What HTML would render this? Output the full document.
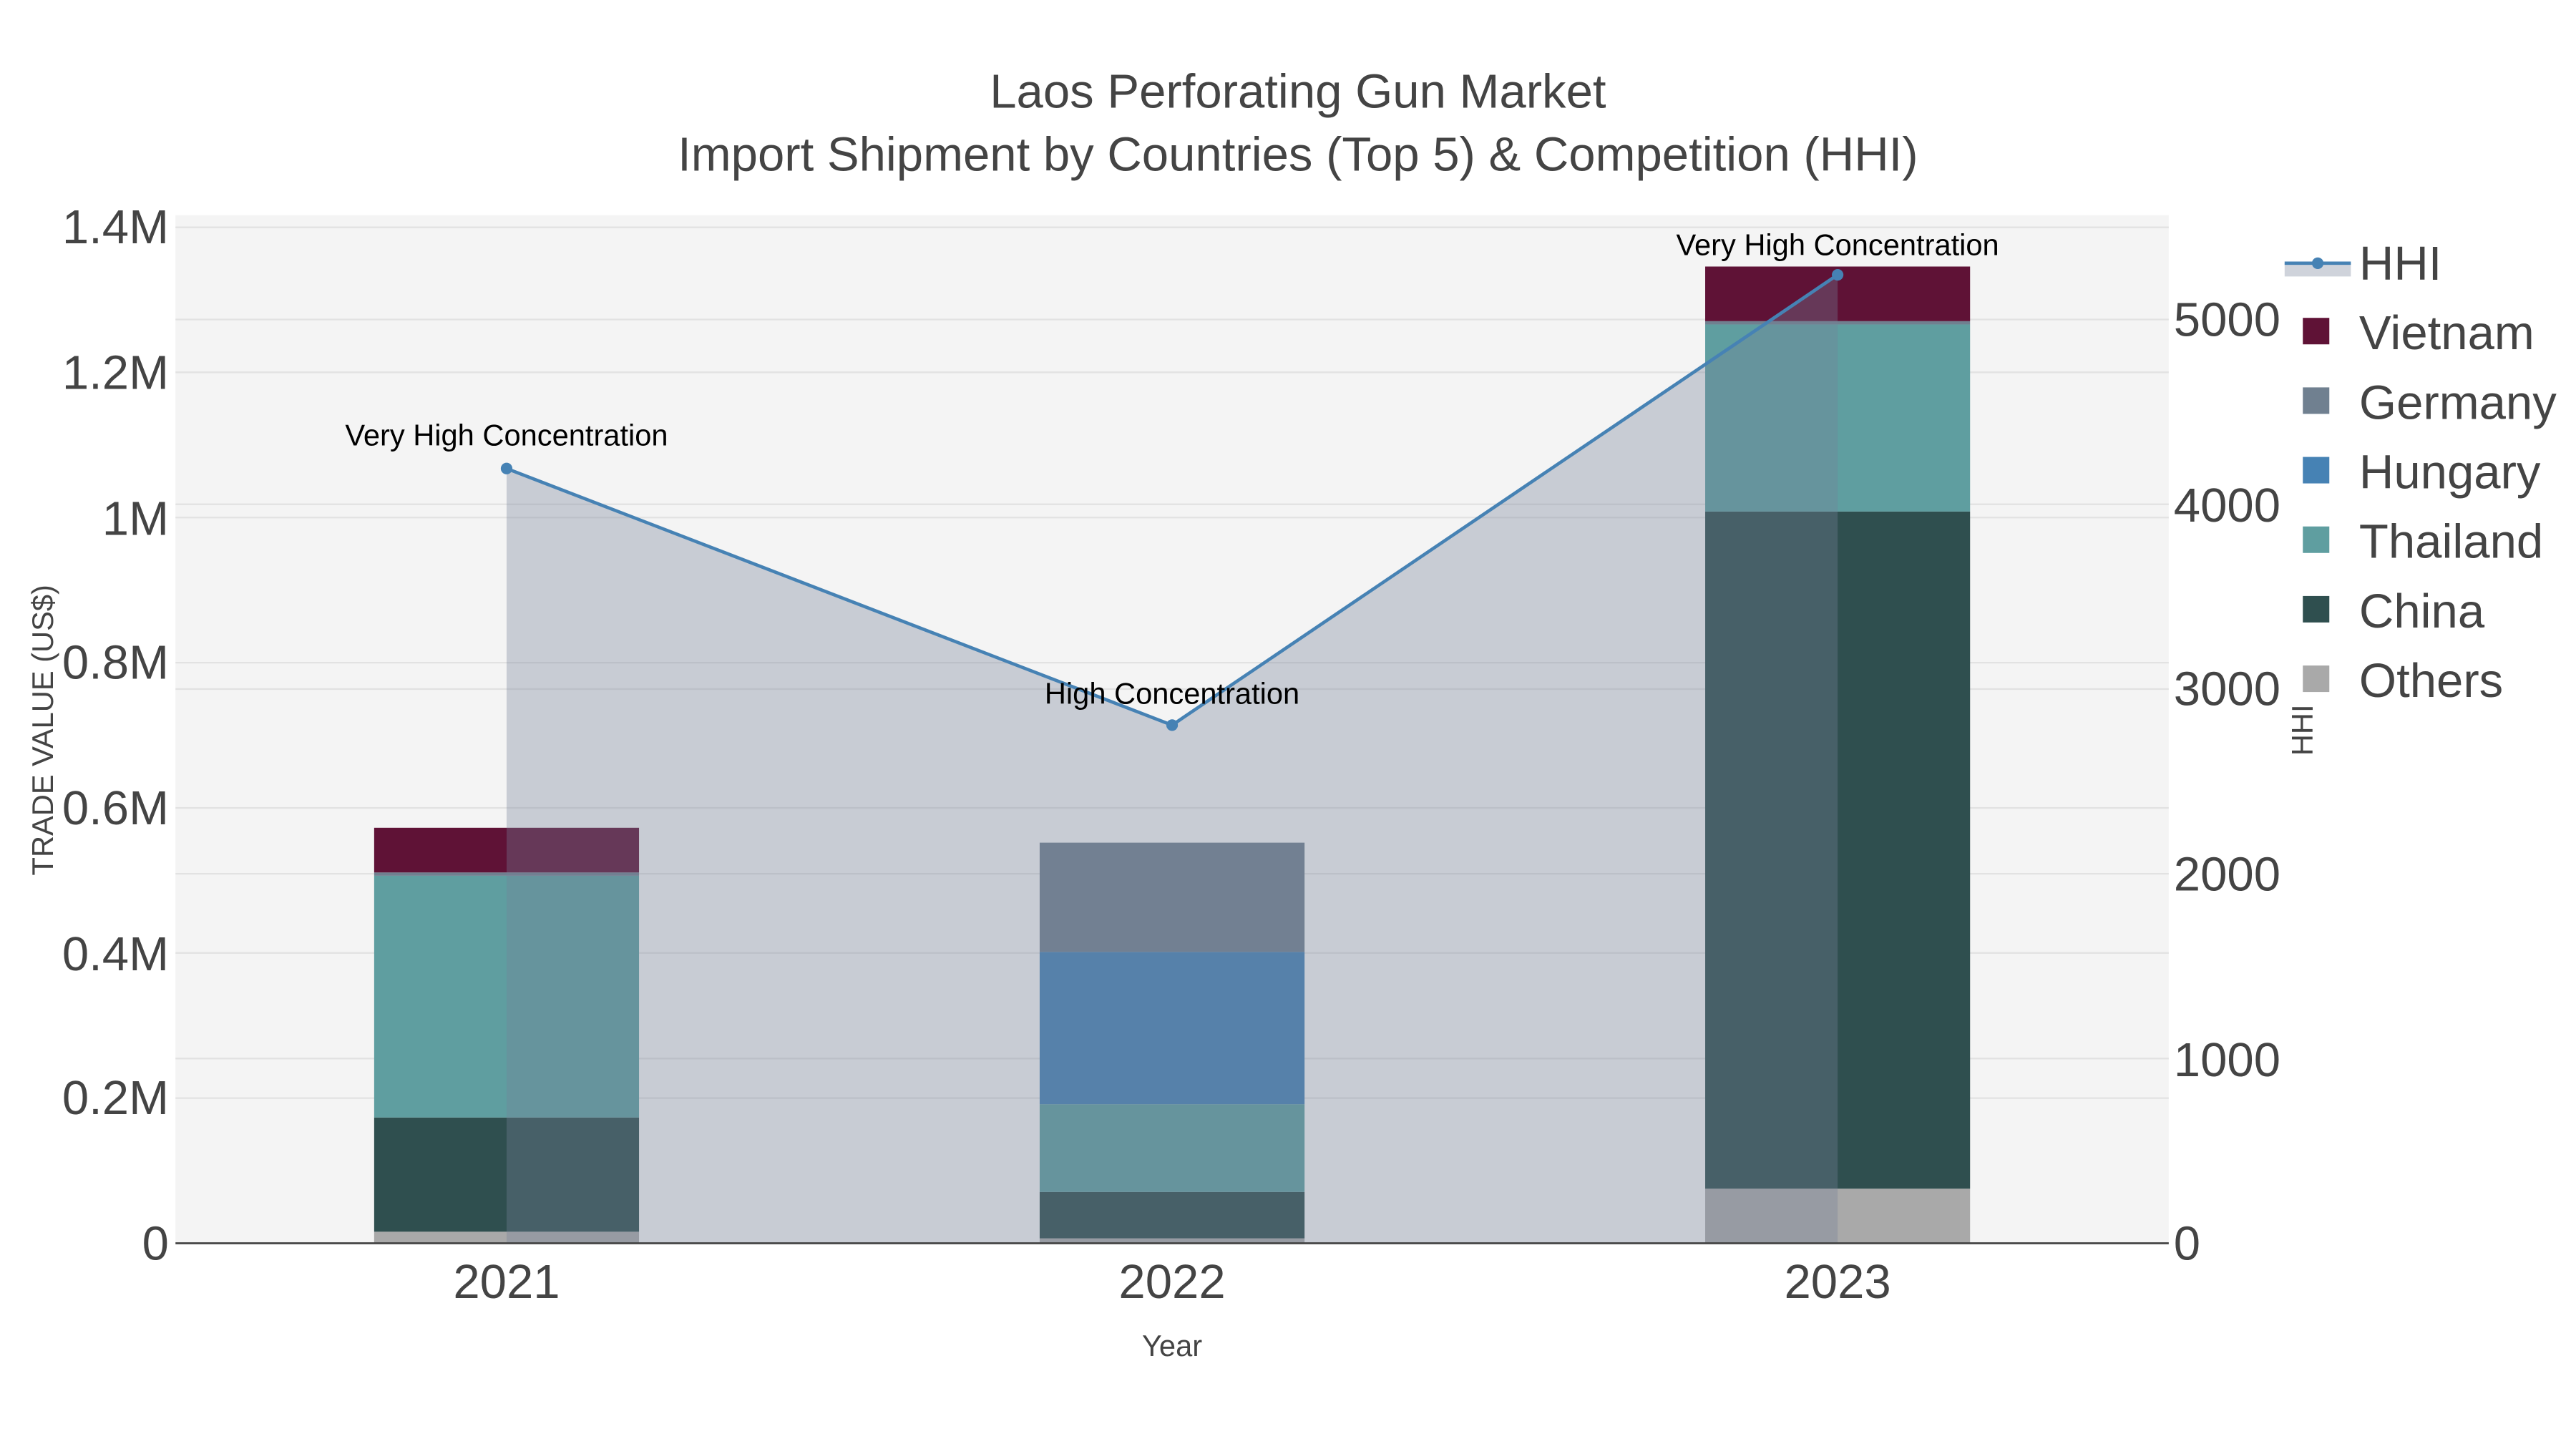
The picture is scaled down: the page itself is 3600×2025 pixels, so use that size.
<!DOCTYPE html>
<html><head><meta charset="utf-8"><style>html,body{margin:0;padding:0;background:#fff}svg{display:block}text{font-family:"Liberation Sans",Arial,sans-serif}</style></head><body>
<svg width="3600" height="2025" viewBox="0 0 1556 875.25" xmlns="http://www.w3.org/2000/svg">
<rect x="0" y="0" width="1556" height="876" fill="#fff"/>
<rect x="106" y="130" width="1204" height="621" fill="#f4f4f4"/>
<g stroke="#e2e2e2" stroke-width="1">
<line x1="106" x2="1310" y1="663.3" y2="663.3"/><line x1="106" x2="1310" y1="575.6" y2="575.6"/><line x1="106" x2="1310" y1="488" y2="488"/><line x1="106" x2="1310" y1="400.3" y2="400.3"/><line x1="106" x2="1310" y1="312.6" y2="312.6"/><line x1="106" x2="1310" y1="224.9" y2="224.9"/><line x1="106" x2="1310" y1="137.3" y2="137.3"/>
<line x1="106" x2="1310" y1="639.4" y2="639.4"/><line x1="106" x2="1310" y1="527.8" y2="527.8"/><line x1="106" x2="1310" y1="416.2" y2="416.2"/><line x1="106" x2="1310" y1="304.6" y2="304.6"/><line x1="106" x2="1310" y1="193" y2="193"/>
</g>
<rect x="226" y="744" width="160" height="7" fill="#a9a9a9"/>
<rect x="226" y="675" width="160" height="69" fill="#2f4f4f"/>
<rect x="226" y="529" width="160" height="146" fill="#5f9ea0"/>
<rect x="226" y="527" width="160" height="2" fill="#708090"/>
<rect x="226" y="500" width="160" height="27" fill="#5f1236"/>
<rect x="628" y="748" width="160" height="3" fill="#a9a9a9"/>
<rect x="628" y="720" width="160" height="28" fill="#2f4f4f"/>
<rect x="628" y="667" width="160" height="53" fill="#5f9ea0"/>
<rect x="628" y="575" width="160" height="92" fill="#4682b4"/>
<rect x="628" y="509" width="160" height="66" fill="#708090"/>
<rect x="1030" y="718" width="160" height="33" fill="#a9a9a9"/>
<rect x="1030" y="309" width="160" height="409" fill="#2f4f4f"/>
<rect x="1030" y="196" width="160" height="113" fill="#5f9ea0"/>
<rect x="1030" y="194" width="160" height="2" fill="#708090"/>
<rect x="1030" y="161" width="160" height="33" fill="#5f1236"/>
<polygon points="306,283 708,438 1110,166 1110,751 306,751" fill="rgb(118,128,152)" fill-opacity="0.35"/>
<line x1="106" x2="1310" y1="751" y2="751" stroke="#444" stroke-width="1.2"/>
<polyline points="306,283 708,438 1110,166" fill="none" stroke="#4682b4" stroke-width="2"/>
<circle cx="306" cy="283" r="3.5" fill="#4682b4"/><circle cx="708" cy="438" r="3.5" fill="#4682b4"/><circle cx="1110" cy="166" r="3.5" fill="#4682b4"/>
<g font-size="18" fill="#000" text-anchor="middle">
<text x="306" y="269">Very High Concentration</text>
<text x="708" y="425">High Concentration</text>
<text x="1110" y="154">Very High Concentration</text>
</g>
<g font-size="29" fill="#444" text-anchor="end">
<text x="102" y="761">0</text><text x="102" y="673">0.2M</text><text x="102" y="586">0.4M</text><text x="102" y="498">0.6M</text><text x="102" y="410">0.8M</text><text x="102" y="323">1M</text><text x="102" y="235">1.2M</text><text x="102" y="147">1.4M</text>
</g>
<g font-size="29" fill="#444" text-anchor="start">
<text x="1313" y="761">0</text><text x="1313" y="650">1000</text><text x="1313" y="538">2000</text><text x="1313" y="426">3000</text><text x="1313" y="315">4000</text><text x="1313" y="203">5000</text>
</g>
<g font-size="29" fill="#444" text-anchor="middle">
<text x="306" y="784">2021</text><text x="708" y="784">2022</text><text x="1110" y="784">2023</text>
</g>
<text x="708" y="819" font-size="18" fill="#444" text-anchor="middle">Year</text>
<text transform="translate(32,441) rotate(-90)" font-size="18" fill="#444" text-anchor="middle">TRADE VALUE (US$)</text>
<text transform="translate(1397,441) rotate(-90)" font-size="18" fill="#444" text-anchor="middle">HHI</text>
<g font-size="29" fill="#444" text-anchor="middle">
<text x="784" y="65">Laos Perforating Gun Market</text>
<text x="784" y="103">Import Shipment by Countries (Top 5) &amp; Competition (HHI)</text>
</g>
<rect x="1380" y="159" width="40" height="8" fill="rgb(118,128,152)" fill-opacity="0.35"/>
<line x1="1380" x2="1420" y1="159" y2="159" stroke="#4682b4" stroke-width="2"/>
<circle cx="1400" cy="159" r="3.5" fill="#4682b4"/>
<rect x="1391" y="192" width="16" height="16" fill="#5f1236"/>
<rect x="1391" y="234" width="16" height="16" fill="#708090"/>
<rect x="1391" y="276" width="16" height="16" fill="#4682b4"/>
<rect x="1391" y="318" width="16" height="16" fill="#5f9ea0"/>
<rect x="1391" y="360" width="16" height="16" fill="#2f4f4f"/>
<rect x="1391" y="402" width="16" height="16" fill="#a9a9a9"/>
<g font-size="29" fill="#444">
<text x="1425" y="169">HHI</text><text x="1425" y="211">Vietnam</text><text x="1425" y="253">Germany</text><text x="1425" y="295">Hungary</text><text x="1425" y="337">Thailand</text><text x="1425" y="379">China</text><text x="1425" y="421">Others</text>
</g>
</svg>
</body></html>
